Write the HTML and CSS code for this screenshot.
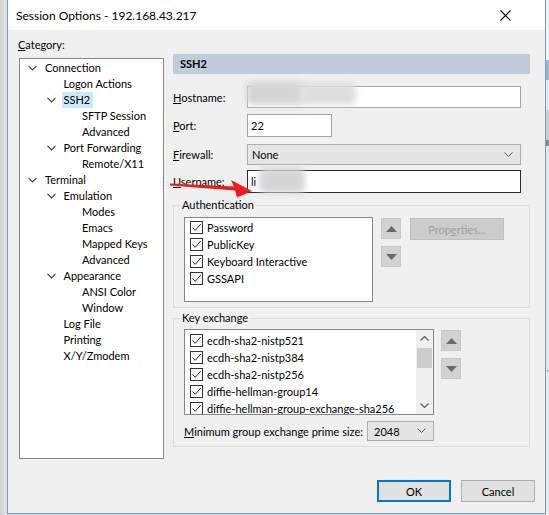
FILE: index.html
```html
<!DOCTYPE html>
<html lang="en">
<head>
  <meta charset="UTF-8" />
  <title>Session Options - 192.168.43.217</title>
  <link rel="stylesheet" href="styles.css">
</head>
<body>

<div class="desk-left"></div>

<div class="window">
  <div class="titlebar">
    <span class="title">Session Options - 192.168.43.217</span>
    <svg class="close" width="11" height="11" viewBox="0 0 11 11"><path d="M0.5 0.5L10.5 10.5M10.5 0.5L0.5 10.5" stroke="#000" stroke-width="1.1" fill="none"/></svg>
  </div>

  <div class="content">
    <!-- category tree -->
    <div class="cat-col">
      <div class="cat-label"><u>C</u>ategory:</div>
      <div class="tree">
        <div class="node d0"><i class="tog"><svg width="9" height="6" viewBox="0 0 9 6"><path d="M0.5 0.8L4.5 4.8L8.5 0.8" stroke="#444" stroke-width="1.2" fill="none"/></svg></i><span>Connection</span></div>
        <div class="node d1"><i class="tog"></i><span>Logon Actions</span></div>
        <div class="node d1 sel"><i class="tog"><svg width="9" height="6" viewBox="0 0 9 6"><path d="M0.5 0.8L4.5 4.8L8.5 0.8" stroke="#444" stroke-width="1.2" fill="none"/></svg></i><span>SSH2</span></div>
        <div class="node d2"><i class="tog"></i><span>SFTP Session</span></div>
        <div class="node d2"><i class="tog"></i><span>Advanced</span></div>
        <div class="node d1"><i class="tog"><svg width="9" height="6" viewBox="0 0 9 6"><path d="M0.5 0.8L4.5 4.8L8.5 0.8" stroke="#444" stroke-width="1.2" fill="none"/></svg></i><span>Port Forwarding</span></div>
        <div class="node d2"><i class="tog"></i><span>Remote/X11</span></div>
        <div class="node d0"><i class="tog"><svg width="9" height="6" viewBox="0 0 9 6"><path d="M0.5 0.8L4.5 4.8L8.5 0.8" stroke="#444" stroke-width="1.2" fill="none"/></svg></i><span>Terminal</span></div>
        <div class="node d1"><i class="tog"><svg width="9" height="6" viewBox="0 0 9 6"><path d="M0.5 0.8L4.5 4.8L8.5 0.8" stroke="#444" stroke-width="1.2" fill="none"/></svg></i><span>Emulation</span></div>
        <div class="node d2"><i class="tog"></i><span>Modes</span></div>
        <div class="node d2"><i class="tog"></i><span>Emacs</span></div>
        <div class="node d2"><i class="tog"></i><span>Mapped Keys</span></div>
        <div class="node d2"><i class="tog"></i><span>Advanced</span></div>
        <div class="node d1"><i class="tog"><svg width="9" height="6" viewBox="0 0 9 6"><path d="M0.5 0.8L4.5 4.8L8.5 0.8" stroke="#444" stroke-width="1.2" fill="none"/></svg></i><span>Appearance</span></div>
        <div class="node d2"><i class="tog"></i><span>ANSI Color</span></div>
        <div class="node d2"><i class="tog"></i><span>Window</span></div>
        <div class="node d1"><i class="tog"></i><span>Log File</span></div>
        <div class="node d1"><i class="tog"></i><span>Printing</span></div>
        <div class="node d1"><i class="tog"></i><span>X/Y/Zmodem</span></div>
      </div>
    </div>

    <!-- SSH2 panel -->
    <div class="panel">
      <div class="hdr">SSH2</div>

      <div class="frow r-host">
        <label><u>H</u>ostname:</label>
        <div class="field wide"><span class="blur b-host1"></span><span class="blur b-host2"></span></div>
      </div>
      <div class="frow r-port">
        <label><u>P</u>ort:</label>
        <div class="field port">22</div>
      </div>
      <div class="frow r-fw">
        <label><u>F</u>irewall:</label>
        <div class="combo wide">None
          <svg class="chev" width="9" height="5" viewBox="0 0 9 5"><path d="M0.5 0.5L4.5 4.5L8.5 0.5" stroke="#555" stroke-width="1" fill="none"/></svg>
        </div>
      </div>
      <div class="frow r-user">
        <label><u>U</u>sername:</label>
        <div class="field wide focus">li<span class="blur b-user"></span></div>
      </div>

      <fieldset class="group auth">
        <legend>Authentication</legend>
        <div class="group-body">
          <div class="listbox auth-list">
            <div class="item"><i class="chk"><svg width="11" height="11" viewBox="0 0 11 11"><path d="M1.5 5.5L4.2 8.3L9.8 2" stroke="#222" stroke-width="1" fill="none"/></svg></i>Password</div>
            <div class="item"><i class="chk"><svg width="11" height="11" viewBox="0 0 11 11"><path d="M1.5 5.5L4.2 8.3L9.8 2" stroke="#222" stroke-width="1" fill="none"/></svg></i>PublicKey</div>
            <div class="item"><i class="chk"><svg width="11" height="11" viewBox="0 0 11 11"><path d="M1.5 5.5L4.2 8.3L9.8 2" stroke="#222" stroke-width="1" fill="none"/></svg></i>Keyboard Interactive</div>
            <div class="item"><i class="chk"><svg width="11" height="11" viewBox="0 0 11 11"><path d="M1.5 5.5L4.2 8.3L9.8 2" stroke="#222" stroke-width="1" fill="none"/></svg></i>GSSAPI</div>
          </div>
          <div class="movers">
            <div class="mv"><svg width="11" height="6" viewBox="0 0 11 6"><path d="M0 6L5.5 0L11 6Z" fill="#6a6a6a"/></svg></div>
            <div class="mv"><svg width="11" height="6" viewBox="0 0 11 6"><path d="M0 0L5.5 6L11 0Z" fill="#6a6a6a"/></svg></div>
          </div>
          <div class="btn disabled props">Prop<u>e</u>rties...</div>
        </div>
      </fieldset>

      <fieldset class="group kex">
        <legend>Key exchange</legend>
        <div class="group-body">
          <div class="listbox kex-list">
            <div class="kex-items">
              <div class="item"><i class="chk"><svg width="11" height="11" viewBox="0 0 11 11"><path d="M1.5 5.5L4.2 8.3L9.8 2" stroke="#222" stroke-width="1" fill="none"/></svg></i>ecdh-sha2-nistp521</div>
              <div class="item"><i class="chk"><svg width="11" height="11" viewBox="0 0 11 11"><path d="M1.5 5.5L4.2 8.3L9.8 2" stroke="#222" stroke-width="1" fill="none"/></svg></i>ecdh-sha2-nistp384</div>
              <div class="item"><i class="chk"><svg width="11" height="11" viewBox="0 0 11 11"><path d="M1.5 5.5L4.2 8.3L9.8 2" stroke="#222" stroke-width="1" fill="none"/></svg></i>ecdh-sha2-nistp256</div>
              <div class="item"><i class="chk"><svg width="11" height="11" viewBox="0 0 11 11"><path d="M1.5 5.5L4.2 8.3L9.8 2" stroke="#222" stroke-width="1" fill="none"/></svg></i>diffie-hellman-group14</div>
              <div class="item"><i class="chk"><svg width="11" height="11" viewBox="0 0 11 11"><path d="M1.5 5.5L4.2 8.3L9.8 2" stroke="#222" stroke-width="1" fill="none"/></svg></i>diffie-hellman-group-exchange-sha256</div>
            </div>
            <div class="vscroll">
              <div class="sb-arrow"><svg width="9" height="5" viewBox="0 0 9 5"><path d="M0.5 4.5L4.5 0.5L8.5 4.5" stroke="#606060" stroke-width="1.2" fill="none"/></svg></div>
              <div class="sb-thumb"></div>
              <div class="sb-arrow down"><svg width="9" height="5" viewBox="0 0 9 5"><path d="M0.5 0.5L4.5 4.5L8.5 0.5" stroke="#606060" stroke-width="1.2" fill="none"/></svg></div>
            </div>
          </div>
          <div class="movers">
            <div class="mv"><svg width="11" height="6" viewBox="0 0 11 6"><path d="M0 6L5.5 0L11 6Z" fill="#6a6a6a"/></svg></div>
            <div class="mv"><svg width="11" height="6" viewBox="0 0 11 6"><path d="M0 0L5.5 6L11 0Z" fill="#6a6a6a"/></svg></div>
          </div>
        </div>
        <div class="min-row">
          <label><u>M</u>inimum group exchange prime size:</label>
          <div class="combo small">2048
            <svg class="chev" width="9" height="5" viewBox="0 0 9 5"><path d="M0.5 0.5L4.5 4.5L8.5 0.5" stroke="#555" stroke-width="1" fill="none"/></svg>
          </div>
        </div>
      </fieldset>
    </div>
  </div>

  <div class="footer">
    <div class="btn default">OK</div>
    <div class="btn">Cancel</div>
  </div>
</div>

<div class="desk-right"></div>

<!-- red annotation arrow drawn over the dialog -->
<svg class="arrow" width="549" height="515" viewBox="0 0 549 515">
  <path d="M170 183.5L234 186.5L231 180L252 191L237 197.5L235 190.5L170 185.5Z" fill="#ee1c1c"/>
</svg>

</body>
</html>
```

FILE: styles.css
```css
* {
  box-sizing: border-box;
}

body {
  margin: 0;
  width: 549px;
  height: 515px;
  display: flex;
  overflow: hidden;
  position: relative;
  background: #d8d8d8;
  font-family: "Lato", "Liberation Sans", sans-serif;
  font-size: 11px;
  color: #000;
}

u {
  text-underline-offset: 1px;
}

.desk-left {
  width: 7px;
  background: linear-gradient(to right, #d2d2d2, #e4e4e4);
}

.desk-right {
  width: 3px;
  background: linear-gradient(to bottom,
    #f4f4f4 0, #f4f4f4 60px,
    #9fb4c8 60px, #9fb4c8 80px,
    #e8e8e8 80px, #e8e8e8 110px,
    #cfcfcf 110px, #cfcfcf 140px,
    #8a8a8a 140px, #8a8a8a 146px,
    #e6e6e6 146px, #e6e6e6 370px,
    #c8c8c8 370px, #c8c8c8 372px,
    #ececec 372px);
}

.window {
  width: 539px;
  height: 514px;
  display: flex;
  flex-direction: column;
  background: #f0f0f0;
  border: 1px solid #6f9fcf;
  border-top: 0;
}

/* --- title bar --- */
.titlebar {
  height: 30px;
  flex: none;
  display: flex;
  align-items: center;
  justify-content: space-between;
  padding-left: 8px;
  font-size: 12px;
  background: #fff;
}

.close {
  margin-right: 34px;
}

/* --- body --- */
.content {
  display: flex;
  padding: 7px 0 0 11px;
}

.cat-col {
  width: 145px;
  flex: none;
}

.cat-label {
  height: 16px;
  line-height: 16px;
  margin: 0 0 5px -1px;
}

.tree {
  height: 401px;
  padding-top: 1px;
  background: #fff;
  border: 1px solid #828790;
}

.node {
  height: 16px;
  line-height: 16px;
  display: flex;
  align-items: center;
  white-space: nowrap;
}

.node.d0 { padding-left: 6px; }
.node.d1 { padding-left: 24.5px; }
.node.d2 { padding-left: 43px; }

.tog {
  width: 17px;
  height: 16px;
  flex: none;
  display: flex;
  align-items: center;
}

.tog svg {
  margin-left: 2px;
}

.node span {
  padding: 0 2px;
}

.node.sel span {
  padding-right: 3px;
  background: #cce8ff;
}

/* --- right panel --- */
.panel {
  width: 357px;
  margin: 17px 0 0 9px;
}

.hdr {
  height: 20px;
  line-height: 20px;
  padding-left: 7px;
  font-weight: bold;
  background: #bfcddb;
}

.frow {
  display: flex;
  align-items: center;
}

.frow label {
  width: 74px;
  flex: none;
}

.r-host { height: 22px; margin-top: 12px; }
.r-port { height: 23px; margin-top: 6px; }
.r-fw   { height: 21px; margin-top: 7px; }
.r-user { height: 23px; margin-top: 5px; }

.field {
  height: 100%;
  position: relative;
  display: flex;
  align-items: center;
  padding-left: 3px;
  background: #fff;
  border: 1px solid #a5a5a5;
}

.field.wide { width: 274px; }
.field.port { width: 85px; }
.field.focus { border-color: #2b2b2b; }

/* privacy blur over the host / user values */
.blur {
  position: absolute;
  background: #d4d4d4;
  border-radius: 6px;
  filter: blur(3px);
}

.b-host1 { left: -2px; top: -6px; width: 58px; height: 24px; background: #d6d6d6; }
.b-host2 { left: 52px; top: -4px; width: 56px; height: 22px; background: #dedede; }
.b-user  { left: 11px; top: -3px; width: 46px; height: 25px; background: #d6d6d6; }

.combo {
  height: 100%;
  position: relative;
  display: flex;
  align-items: center;
  padding-left: 4px;
  white-space: nowrap;
  background: #e5e5e5;
  border: 1px solid #adadad;
}

.combo.wide { width: 274px; }

.chev {
  position: absolute;
  right: 7px;
  top: 50%;
  margin-top: -3px;
}

/* --- group boxes --- */
.group {
  margin: 0;
  min-width: 0;
  border: 1px solid #dcdcdc;
}

.group legend {
  padding: 0 2px;
  line-height: 16px;
}

.group.auth {
  margin-top: 4px;
  padding: 4px 6px 5px;
}

.group.kex {
  margin-top: 2px;
  padding: 3px 6px 5px;
}

.group-body {
  display: flex;
  align-items: flex-start;
  padding-left: 4px;
}

.listbox {
  background: #fff;
  border: 1px solid #828790;
  overflow: hidden;
}

.auth-list {
  width: 189px;
  height: 85px;
  padding-top: 1px;
}

.item {
  height: 17px;
  display: flex;
  align-items: center;
  padding-left: 5px;
  white-space: nowrap;
}

.chk {
  width: 13px;
  height: 13px;
  flex: none;
  margin-right: 4px;
  border: 1px solid #333;
  background: #fff;
}

.chk svg {
  display: block;
}

.movers {
  display: flex;
  flex-direction: column;
  gap: 7px;
  margin: 1px 0 0 8px;
}

.mv {
  width: 20px;
  height: 21px;
  display: flex;
  align-items: center;
  justify-content: center;
  background: #d2d2d2;
  border: 1px solid #c8c8c8;
}

.btn {
  width: 74px;
  height: 22px;
  display: flex;
  align-items: center;
  justify-content: center;
  background: #e1e1e1;
  border: 1px solid #adadad;
}

.btn.props {
  width: 94px;
  margin: 1px 0 0 9px;
}

.btn.disabled {
  color: #a0a0a0;
  background: #cccccc;
  border-color: #bfbfbf;
}

.btn.default {
  border: 2px solid #0078d7;
}

.kex-list {
  width: 250px;
  height: 86px;
  display: flex;
}

.kex-list + .movers {
  margin-left: 7px;
}

.kex-items {
  flex: 1;
  padding-top: 2px;
  overflow: hidden;
}

.vscroll {
  width: 17px;
  flex: none;
  display: flex;
  flex-direction: column;
  background: #f0f0f0;
}

.sb-arrow {
  height: 17px;
  display: flex;
  align-items: center;
  justify-content: center;
}

.sb-arrow.down {
  margin-top: auto;
}

.sb-thumb {
  height: 20px;
  margin: 1px 1px 0;
  background: #cdcdcd;
}

.min-row {
  height: 20px;
  margin: 6px 0 0 4px;
  display: flex;
  align-items: center;
}

.min-row label {
  width: 183px;
  flex: none;
  white-space: nowrap;
}

.combo.small {
  width: 67px;
  padding-left: 6px;
}

/* --- footer buttons --- */
.footer {
  margin-top: auto;
  display: flex;
  justify-content: flex-end;
  gap: 10px;
  padding: 0 10px 11px 0;
}

.arrow {
  position: absolute;
  left: 0;
  top: 0;
  pointer-events: none;
}
```
